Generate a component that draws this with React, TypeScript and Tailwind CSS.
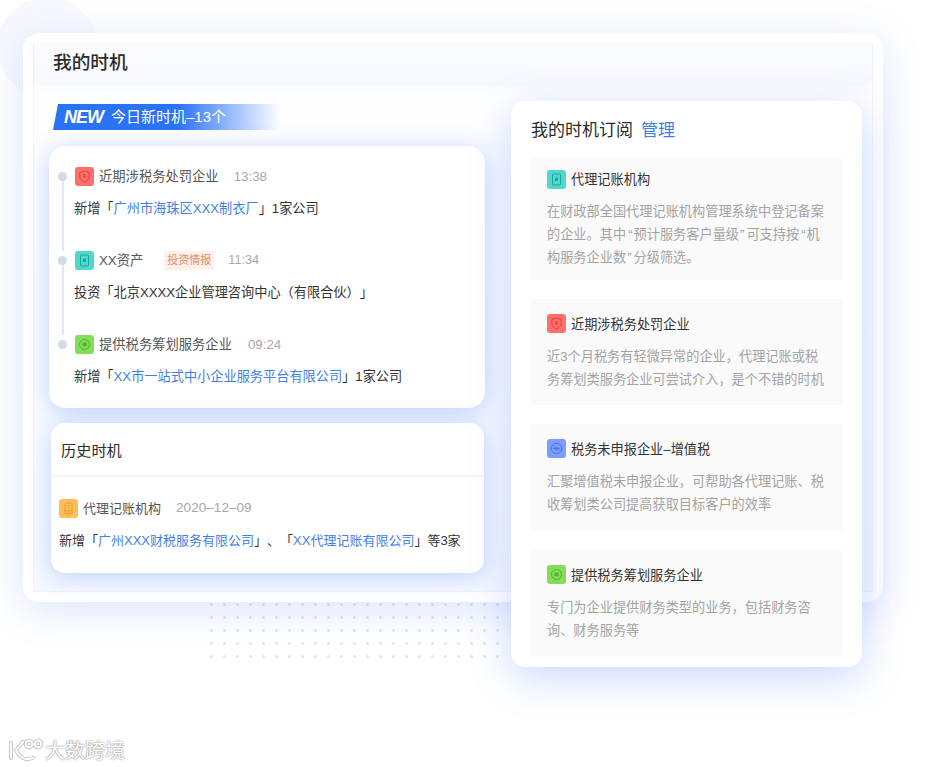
import React from "react";

const Ic = ({ c, s, kind }: { c: string; s: string; kind: string }) => (
  <span className={`w-[19px] h-[19px] flex-none rounded-[3px] flex items-center justify-center ${c}`}>
    <svg width="13" height="13" viewBox="0 0 13 13" fill="none" stroke={s} strokeWidth="1">
      {kind === "shield" && (
        <>
          <path d="M6.5 1 L11.2 2.6 V6.5 C11.2 9.2 9 11 6.5 12 C4 11 1.8 9.2 1.8 6.5 V2.6 Z" />
          <path d="M4.5 4.8 H8.5 M6.5 4.8 V8.4 M4.8 6.6 H8.2" strokeWidth="0.8" />
        </>
      )}
      {kind === "doc" && (
        <>
          <rect x="2.5" y="1" width="8" height="11" rx="1" />
          <rect x="5" y="4.6" width="3" height="3.4" fill={s} stroke="none" />
        </>
      )}
      {kind === "green" && (
        <>
          <circle cx="6.5" cy="6.5" r="5" />
          <rect x="4.4" y="4.6" width="4.2" height="3.6" rx="0.6" fill={s} stroke="none" />
        </>
      )}
      {kind === "minus" && (
        <>
          <circle cx="6.5" cy="6.5" r="5.2" />
          <rect x="3.6" y="5.6" width="5.8" height="1.8" rx="0.5" fill={s} stroke="none" />
        </>
      )}
      {kind === "phone" && (
        <>
          <rect x="3" y="1" width="7" height="11" rx="1" />
          <path d="M3 8.8 H10 M5 4 H8 M5 6 H8 M6.5 8.8 V12" strokeWidth="0.8" />
        </>
      )}
    </svg>
  </span>
);

const A = ({ children }: { children: React.ReactNode }) => <span className="text-[#3f7fe6]">{children}</span>;
const QO = () => <span className="pl-[2px] pr-[1px]">“</span>;
const QC = () => <span className="pl-[1px] pr-[2px]">”</span>;

const Item = ({
  icon, name, time, tag, body, last, timeMl,
}: {
  icon: React.ReactNode; name: string; time: string; tag?: boolean; body: React.ReactNode; last?: boolean; timeMl: string;
}) => (
  <div className={`flex ${last ? "h-[40px]" : "h-[84px]"}`}>
    <div className="w-[25px] flex-none flex flex-col items-center">
      <span className="w-[9px] h-[9px] rounded-full bg-[#d3daea] mt-[5px] flex-none" />
      {!last && <span className="w-[2px] flex-1 bg-[#e4e8f3]" />}
    </div>
    <div className="flex flex-col">
      <div className="flex items-center h-[19px]">
        {icon}
        <span className="ml-[5px] text-[13.3px] text-[#555]">{name}</span>
        {tag && (
          <span className="ml-[21px] h-[19px] w-[50px] flex items-center justify-center rounded-[2px] bg-[#fdf1ec] text-[#ee8a64] text-[11px]">
            投资情报
          </span>
        )}
        <span className={`${timeMl} ${tag ? "text-[12.6px]" : "text-[13.3px]"} text-[#a8a8a8]`}>{time}</span>
      </div>
      <div className="mt-[13px] -ml-[1px] h-[20px] leading-[20px] text-[13.2px] text-[#333] whitespace-nowrap">{body}</div>
    </div>
  </div>
);

const Sub = ({
  icon, title, lines, h, pt, mt, tp,
}: {
  icon: React.ReactNode; title: string; lines: React.ReactNode[]; h: string; pt: string; mt: string; tp: string;
}) => (
  <div className={`bg-[#fafafa] rounded-[2px] pl-[16px] ${pt} ${h}`}>
    <div className="flex items-center h-[19px]">
      {icon}
      <span className={`ml-[5px] text-[13.2px] text-[#333] ${tp}`}>{title}</span>
    </div>
    <div className={mt}>
      {lines.map((l, i) => (
        <div key={i} className="h-[23px] leading-[23px] text-[13.2px] text-[#a3a3a3] whitespace-nowrap">{l}</div>
      ))}
    </div>
  </div>
);

export default function App() {
  return (
    <div
      className="relative w-[945px] h-[767px] overflow-hidden bg-white pt-[33px] pl-[23px] [text-spacing-trim:space-all]"
      style={{ fontFamily: '"Liberation Sans","Noto Sans CJK SC",sans-serif' }}
    >
      <div className="absolute left-[-3px] top-[-3px] w-[100px] h-[100px] rounded-full bg-gradient-to-br from-[#f6f8fe] to-[#fbfcff]" />
      <div className="absolute left-[205px] top-[598px] w-[299px] h-[66px] bg-[radial-gradient(circle,#e3e6ee_1.3px,transparent_1.5px)] bg-[length:13px_13px]" />

      <div className="relative w-[860px] h-[569px] rounded-[16px] bg-white p-[10px] shadow-[0_8px_40px_rgba(60,110,240,0.18)]">
        <div className="h-[549px] border border-[#f1f4fa] border-t-0 bg-gradient-to-b from-[#ffffff] to-[#f6f9ff]">
          <div className="h-[40px] pl-[19px] flex items-center bg-gradient-to-b from-[#fafbfe] to-[#f7f9fd] shadow-[0_3px_10px_rgba(120,140,190,0.08)]">
            <span className="text-[18.7px] text-[#2b2b2b] font-medium">我的时机</span>
          </div>

          <div className="flex">
            <div className="w-[477px] flex-none">
              <div className="ml-[19px] mt-[21px] h-[26px] w-[227px] pl-[11px] flex items-center bg-gradient-to-r from-[#2b73f5] from-55% to-[#2b73f5]/0 [clip-path:polygon(5px_0,100%_0,100%_100%,0_100%)]">
                <span className="text-white text-[18px] font-bold italic tracking-[-1px]">NEW</span>
                <span className="ml-[8px] text-white text-[15px]">今日新时机–13个</span>
              </div>

              <div className="ml-[15px] mt-[16px] w-[436px] h-[262px] rounded-[16px] bg-white pt-[21px] pl-[1px] shadow-[0_4px_24px_rgba(50,110,240,0.3)]">
                <Item
                  icon={<Ic c="bg-[#ff6f6c]" s="#d9413f" kind="shield" />}
                  name="近期涉税务处罚企业"
                  time="13:38"
                  timeMl="ml-[15px]"
                  body={<>新增「<A>广州市海珠区XXX制衣厂</A>」1家公司</>}
                />
                <Item
                  icon={<Ic c="bg-[#4fd8cc]" s="#1fa39a" kind="doc" />}
                  name="XX资产"
                  time="11:34"
                  timeMl="ml-[14px]"
                  tag
                  body={<>投资「北京XXXX企业管理咨询中心（有限合伙）」</>}
                />
                <Item
                  last
                  icon={<Ic c="bg-[#85dc58]" s="#4fb22a" kind="green" />}
                  name="提供税务筹划服务企业"
                  time="09:24"
                  timeMl="ml-[16px]"
                  body={<>新增「<A>XX市一站式中小企业服务平台有限公司</A>」1家公司</>}
                />
              </div>

              <div className="ml-[17px] mt-[15px] w-[433px] h-[150px] rounded-[14px] bg-white shadow-[0_4px_24px_rgba(50,110,240,0.28)]">
                <div className="h-[54px] pl-[10px] pt-[5px] flex items-center border-b-2 border-[#f3f4f7]">
                  <span className="text-[15.2px] text-[#2b2b2b]">历史时机</span>
                </div>
                <div className="pl-[8px] pt-[22px]">
                  <div className="flex items-center h-[19px]">
                    <Ic c="bg-[#ffbe5c]" s="#e89a2a" kind="phone" />
                    <span className="ml-[5px] text-[13px] text-[#555]">代理记账机构</span>
                    <span className="ml-[15px] text-[13.6px] text-[#a8a8a8]">2020–12–09</span>
                  </div>
                  <div className="mt-[13px] h-[20px] leading-[20px] text-[13px] text-[#333] whitespace-nowrap">
                    新增「<A>广州XXX财税服务有限公司</A>」、「<A>XX代理记账有限公司</A>」等3家
                  </div>
                </div>
              </div>
            </div>

            <div className="mt-[18px] w-[351px] h-[566px] flex-none rounded-[14px] bg-white px-[20px] shadow-[0_10px_40px_rgba(60,115,245,0.28)]">
              <div className="h-[57px] pt-[2px] flex items-center text-[17px]">
                <span className="text-[#2b2b2b]">我的时机订阅</span>
                <span className="ml-[8px] text-[#3f7fe6]">管理</span>
              </div>
              <div className="flex flex-col w-[312px]">
                <Sub
                  h="h-[122px]"
                  pt="pt-[12px]"
                  mt="mt-[11px]"
                  tp="pt-0"
                  icon={<Ic c="bg-[#4fd8cc]" s="#1fa39a" kind="doc" />}
                  title="代理记账机构"
                  lines={[
                    "在财政部全国代理记账机构管理系统中登记备案",
                    <>的企业。其中<QO />预计服务客户量级<QC />可支持按<QO />机</>,
                    <>构服务企业数<QC />分级筛选。</>,
                  ]}
                />
                <div className="h-[19px] flex-none" />
                <Sub
                  h="h-[106px]"
                  pt="pt-[15px]"
                  mt="mt-[12px]"
                  tp="pt-[2px]"
                  icon={<Ic c="bg-[#ff6f6c]" s="#d9413f" kind="shield" />}
                  title="近期涉税务处罚企业"
                  lines={["近3个月税务有轻微异常的企业，代理记账或税", "务筹划类服务企业可尝试介入，是个不错的时机"]}
                />
                <div className="h-[19px] flex-none" />
                <Sub
                  h="h-[107px]"
                  pt="pt-[15px]"
                  mt="mt-[12px]"
                  tp="pt-[2px]"
                  icon={<Ic c="bg-[#7c9cff]" s="#4a70ea" kind="minus" />}
                  title="税务未申报企业–增值税"
                  lines={["汇聚增值税未申报企业，可帮助各代理记账、税", "收筹划类公司提高获取目标客户的效率"]}
                />
                <div className="h-[19px] flex-none" />
                <Sub
                  h="h-[106px]"
                  pt="pt-[15px]"
                  mt="mt-[12px]"
                  tp="pt-[2px]"
                  icon={<Ic c="bg-[#85dc58]" s="#4fb22a" kind="green" />}
                  title="提供税务筹划服务企业"
                  lines={["专门为企业提供财务类型的业务，包括财务咨", "询、财务服务等"]}
                />
              </div>
            </div>
          </div>
        </div>
      </div>

      <div className="absolute left-[8px] top-[736px] flex items-center">
        <svg width="36" height="26" viewBox="0 0 36 26" fill="none" strokeLinecap="round">
          <g stroke="#c4c4c4" strokeWidth="4">
            <path d="M3 5 V20 M15 4 L8 12 C11 19 17 23 25 20" />
            <circle cx="21" cy="6" r="3.4" />
            <circle cx="30" cy="6" r="3.4" />
          </g>
          <g stroke="#ffffff" strokeWidth="2">
            <path d="M3 5 V20 M15 4 L8 12 C11 19 17 23 25 20" />
            <circle cx="21" cy="6" r="3.4" />
            <circle cx="30" cy="6" r="3.4" />
          </g>
        </svg>
        <span className="ml-[1px] text-[20px] text-white [text-shadow:0_0_2px_#8f8f8f,0_0_1px_#8f8f8f]">大数跨境</span>
      </div>
    </div>
  );
}
